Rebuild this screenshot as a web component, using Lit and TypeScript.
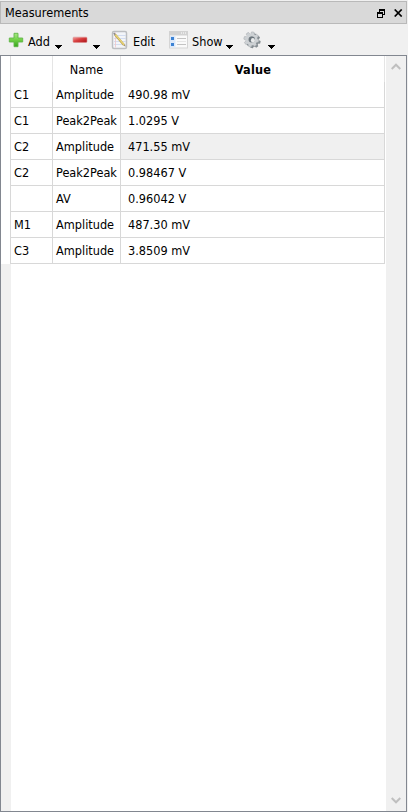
import { LitElement, html, svg, css } from "lit";
import { customElement } from "lit/decorators.js";
import { classMap } from "lit/directives/class-map.js";

const rows: [string, string, string][] = [
  ["C1", "Amplitude", "490.98 mV"],
  ["C1", "Peak2Peak", "1.0295 V"],
  ["C2", "Amplitude", "471.55 mV"],
  ["C2", "Peak2Peak", "0.98467 V"],
  ["", "AV", "0.96042 V"],
  ["M1", "Amplitude", "487.30 mV"],
  ["C3", "Amplitude", "3.8509 mV"],
];

const teeth = [0, 45, 90, 135, 180, 225, 270, 315];

@customElement("app-root")
export class AppRoot extends LitElement {
  static styles = css`
    :host {
      display: flex;
      flex-direction: column;
      box-sizing: border-box;
      width: 408px;
      height: 812px;
      padding: 1px 1px 0 0;
      background: #f0f0f0;
      color: #000;
      font: 12.6px/16px "DejaVu Sans Condensed", "DejaVu Sans", sans-serif;
      font-stretch: condensed;
      overflow: hidden;
      white-space: nowrap;
    }
    svg { display: block; flex: none; }
    .title {
      display: flex;
      align-items: center;
      box-sizing: border-box;
      height: 23px;
      border: 1px solid #b9b9b9;
      background: #d9d9d9;
      padding: 1px 3px 0 4px;
    }
    .title span { flex: 1; }
    .title .restore { margin-right: 8px; }
    .tools {
      display: flex;
      align-items: center;
      height: 31px;
      padding: 1px 0 0 8px;
      box-sizing: border-box;
    }
    .label { padding-top: 3px; }
    .add { width: 22px; margin-left: 4px; }
    .edit { width: 21px; margin-left: 4px; }
    .show { width: 32px; margin-left: 4px; }
    .arrow { margin-top: 14px; }
    .a1 { margin-left: 5px; }
    .minus { margin-left: 10px; }
    .a2 { margin-left: 5px; }
    .page { margin-left: 11px; }
    .list { margin-left: 14px; }
    .a3 { margin-left: 2px; }
    .gear { margin-left: 10px; }
    .a4 { margin-left: 7px; }
    .frame {
      flex: 1;
      display: flex;
      border: 1px solid #828790;
      background: #fff;
    }
    .gutter { width: 10px; margin-right: -1px; padding-top: 208px; box-sizing: border-box; display: flex; }
    .gutter div { flex: 1; background: #f0f0f0; }
    .body { flex: 1; }
    .grid {
      display: grid;
      grid-template-columns: 42px 68px 264px;
      width: 375px;
      box-sizing: border-box;
      border-left: 1px solid #d8d8d8;
    }
    .cell {
      box-sizing: border-box;
      height: 26px;
      padding: 5px 0 0 3px;
      border-right: 1px solid #d8d8d8;
      border-bottom: 1px solid #d8d8d8;
    }
    .head {
      border-color: #e5e5e5;
      border-bottom: none;
      padding: 6px 0 0;
      text-align: center;
    }
    .bold { font-weight: bold; letter-spacing: 0.2px; padding-left: 1px; }
    .value { padding-left: 7px; }
    .shade { background: #f0f0f0; }
    .scroll {
      width: 20px;
      display: flex;
      flex-direction: column;
      align-items: center;
      justify-content: space-between;
      padding: 7px 0;
      box-sizing: border-box;
      background: #f0f0f0;
    }
  `;

  arrow(cls: string) {
    return html`<svg class="arrow ${cls}" width="7" height="4" shape-rendering="crispEdges">
      <path d="M0 0h7v1h-1v1h-1v1h-1v1h-1v-1h-1v-1h-1v-1h-1z" /></svg>`;
  }

  render() {
    return html`
      <div class="title">
        <span>Measurements</span>
        <svg class="restore" width="9" height="9" shape-rendering="crispEdges">
          <path d="M2 0h6v6h-2v-1h1v-3h-4v1h-1zM0 3h6v6h-6zM1 5v3h4v-3z" fill-rule="evenodd" />
        </svg>
        <svg width="9" height="8" viewBox="0 0 9 8">
          <path d="M.7 .5L7.700 7.500M7.700 .5L.7 7.500" stroke="#000" stroke-width="1.700" />
        </svg>
      </div>
      <div class="tools">
        <svg width="16" height="16" viewBox="0 0 16 16">
          <defs><linearGradient id="g" x2="0" y2="1"><stop stop-color="#a6e884" /><stop offset=".5" stop-color="#6fd045" /><stop offset="1" stop-color="#35a51c" /></linearGradient></defs>
          <path d="M6 1.300h4v4.700h4.700v4h-4.700v4.700h-4v-4.700h-4.700v-4h4.700z" fill="url(#g)" stroke="#62b54a" stroke-width=".9" stroke-linejoin="round" />
        </svg>
        <div class="label add">Add</div>
        ${this.arrow("a1")}
        <svg class="minus" width="16" height="16" viewBox="0 0 16 16">
          <defs><linearGradient id="r" x2="1" y2="1"><stop stop-color="#f3a0a0" /><stop offset=".45" stop-color="#d94040" /><stop offset="1" stop-color="#a90d14" /></linearGradient></defs>
          <rect x="1" y="5.200" width="14" height="5.200" rx=".8" fill="url(#r)" stroke="#dc9090" stroke-width=".6" />
        </svg>
        ${this.arrow("a2")}
        <svg class="page" width="18" height="20" viewBox="0 0 18 20">
          <rect x="1.500" y="1.500" width="14" height="17" rx="1.500" fill="#f3f5f9" stroke="#bcbec1" stroke-width="1.500" />
          <path d="M3 5.500h12M3 8.500h12M3 11.500h12M3 14.500h12" stroke="#d3ddf0" />
          <path d="M4.500 2.500v15" stroke="#efc5c8" stroke-width=".8" />
          <path d="M4 4.500l9 10.500" stroke="#b9a255" stroke-width="2.200" />
          <path d="M4.200 4.300l9 10.500" stroke="#ecd878" stroke-width="1.300" />
          <path d="M2.800 3.100l1.400 1.600" stroke="#888" stroke-width="1.500" />
          <path d="M12.600 15.500l1.300-1.200.8 2.500z" fill="#9b8c70" />
        </svg>
        <div class="label edit">Edit</div>
        <svg class="list" width="20" height="18" viewBox="0 0 20 18">
          <rect x="1.500" y=".5" width="18" height="16.500" fill="#fafafa" stroke="#d5d5d5" />
          <rect x="1" y="0" width="19" height="4.500" fill="#d2d2d2" />
          <path d="M13 2h1m1 0h1m1 0h1" stroke="#fff" />
          <rect x="2" y="5" width="5.500" height="11.500" fill="#dce9fa" />
          <path d="M3 6h3v3h-3zM3 12h3v3h-3z" fill="#3b82d4" />
          <path d="M9 7.500h9M9 13.500h9" stroke="#c3c3c3" />
          <path d="M9 10.500h9" stroke="#e7e7e7" />
        </svg>
        <div class="label show">Show</div>
        ${this.arrow("a3")}
        <svg class="gear" width="18" height="18" viewBox="0 0 18 18">
          <g transform="translate(10.200 9.800)" fill="#858d92">
            ${teeth.map((a) => svg`<rect x="-1.500" y="-7.400" width="3" height="4" rx=".6" transform=${`rotate(${a + 12})`} />`)}
            <circle r="4.300" fill="none" stroke="#858d92" stroke-width="3.400" />
          </g>
          <g transform="translate(8.400 8.400)" fill="#cdd1d4">
            ${teeth.map((a) => svg`<rect x="-1.500" y="-7.500" width="3" height="4" rx=".6" stroke="#a4a9ad" stroke-width=".5" transform=${`rotate(${a + 12})`} />`)}
            <circle r="4.500" fill="none" stroke="#cdd1d4" stroke-width="3" />
            <circle cx=".6" cy=".2" r="3" fill="#6b757c" />
            <ellipse cx="1.500" cy=".9" rx="2" ry="2.200" fill="#e8eaeb" />
          </g>
        </svg>
        ${this.arrow("a4")}
      </div>
      <div class="frame">
        <div class="gutter"><div></div></div>
        <div class="body">
          <div class="grid">
            <div class="cell head"></div>
            <div class="cell head">Name</div>
            <div class="cell head bold">Value</div>
            ${rows.map(([ch, name, value], i) => html`
              <div class="cell">${ch}</div>
              <div class="cell">${name}</div>
              <div class=${classMap({ cell: true, value: true, shade: i === 2 })}>${value}</div>
            `)}
          </div>
        </div>
        <div class="scroll">
          <svg width="10" height="7" viewBox="0 0 10 7"><path d="M.7 6L5 1.700L9.300 6" fill="none" stroke="#bfbfbf" stroke-width="2" /></svg>
          <svg width="10" height="7" viewBox="0 0 10 7"><path d="M.7 1L5 5.300L9.300 1" fill="none" stroke="#bfbfbf" stroke-width="2" /></svg>
        </div>
      </div>
    `;
  }
}
